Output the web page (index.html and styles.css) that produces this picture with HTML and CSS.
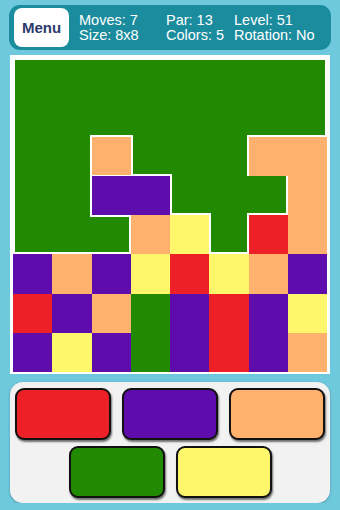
FILE: index.html
```html
<!DOCTYPE html>
<html>
<head>
    <title>Flood Board</title>
    <link rel="stylesheet" href="styles.css">
</head>
<body>
    <div class="topbar">
        <button class="menu-btn">Menu</button>
        <div class="stats">
            <span>Moves: 7</span><span>Par: 13</span><span>Level: 51</span>
            <span>Size: 8x8</span><span>Colors: 5</span><span>Rotation: No</span>
        </div>
    </div>

    <div class="board">
        <!-- row 0 -->
        <div class="cell green bt bl"></div>
        <div class="cell green bt"></div>
        <div class="cell green bt"></div>
        <div class="cell green bt"></div>
        <div class="cell green bt"></div>
        <div class="cell green bt"></div>
        <div class="cell green bt"></div>
        <div class="cell green bt br"></div>
        <!-- row 1 -->
        <div class="cell green bl"></div>
        <div class="cell green cbr"></div>
        <div class="cell green bb"></div>
        <div class="cell green cbl"></div>
        <div class="cell green"></div>
        <div class="cell green cbr"></div>
        <div class="cell green bb"></div>
        <div class="cell green br bb"></div>
        <!-- row 2 -->
        <div class="cell green bl"></div>
        <div class="cell green br"></div>
        <div class="cell orange bb thin"></div>
        <div class="cell green bl bb"></div>
        <div class="cell green cbl"></div>
        <div class="cell green br"></div>
        <div class="cell orange"></div>
        <div class="cell orange"></div>
        <!-- row 3 -->
        <div class="cell green bl"></div>
        <div class="cell green br"></div>
        <div class="cell purple"></div>
        <div class="cell purple"></div>
        <div class="cell green bl bb"></div>
        <div class="cell green cbl cbr"></div>
        <div class="cell green br bb"></div>
        <div class="cell orange"></div>
        <!-- row 4 -->
        <div class="cell green bl bb"></div>
        <div class="cell green bb ctr"></div>
        <div class="cell green bt br bb"></div>
        <div class="cell orange"></div>
        <div class="cell yellow"></div>
        <div class="cell green bl br bb"></div>
        <div class="cell red"></div>
        <div class="cell orange"></div>
        <!-- row 5 -->
        <div class="cell purple"></div>
        <div class="cell orange"></div>
        <div class="cell purple"></div>
        <div class="cell yellow"></div>
        <div class="cell red"></div>
        <div class="cell yellow"></div>
        <div class="cell orange"></div>
        <div class="cell purple"></div>
        <!-- row 6 -->
        <div class="cell red"></div>
        <div class="cell purple"></div>
        <div class="cell orange"></div>
        <div class="cell green"></div>
        <div class="cell purple"></div>
        <div class="cell red"></div>
        <div class="cell purple"></div>
        <div class="cell yellow"></div>
        <!-- row 7 -->
        <div class="cell purple"></div>
        <div class="cell yellow"></div>
        <div class="cell purple"></div>
        <div class="cell green"></div>
        <div class="cell purple"></div>
        <div class="cell red"></div>
        <div class="cell purple"></div>
        <div class="cell orange"></div>
    </div>

    <div class="palette">
        <button class="swatch red"></button>
        <button class="swatch purple"></button>
        <button class="swatch orange"></button>
        <button class="swatch green"></button>
        <button class="swatch yellow"></button>
    </div>
</body>
</html>
```

FILE: styles.css
```css
:root {
    --green: #218a00;
    --orange: #ffb16e;
    --purple: #5e0cab;
    --red: #ec2026;
    --yellow: #fff76b;
}

body {
    margin: 0;
    background: #6fc9dd;
    font-family: "Liberation Sans", Arial, sans-serif;
}

.topbar {
    display: flex;
    align-items: center;
    height: 45px;
    margin: 5px 9px 0;
    padding: 0 5px;
    background: #1b8c9e;
    border-radius: 11px;
    box-sizing: border-box;
}

.menu-btn {
    width: 55px;
    height: 39px;
    border: none;
    border-radius: 8px;
    background: #fff;
    color: #2c3a6c;
    font-family: inherit;
    font-weight: bold;
    font-size: 15px;
    padding: 0;
}

.stats {
    display: grid;
    grid-template-columns: 87px 68px auto;
    margin-left: 10px;
    color: #fff;
    font-size: 14.5px;
    line-height: 15px;
    white-space: nowrap;
}

.board {
    display: grid;
    grid-template-columns: repeat(8, 1fr);
    grid-auto-rows: 39.25px;
    margin: 5px 10px 0;
    padding: 3px 3px 2px;
    background: #fff;
}

.cell { box-sizing: border-box; position: relative; }
.bt { border-top: 2px solid #fff; }
.br { border-right: 2px solid #fff; }
.bb { border-bottom: 2px solid #fff; }
.bl { border-left: 2px solid #fff; }
.thin { border-bottom-width: 1.5px; }

/* inner corners of the flooded area */
.cbl::before, .cbr::after, .ctr::after {
    content: '';
    position: absolute;
    width: 2px;
    height: 2px;
    background: #fff;
}
.cbl::before { left: 0; bottom: 0; }
.cbr::after { right: 0; bottom: 0; }
.ctr::after { right: 0; top: 0; }

.green { background: var(--green); }
.orange { background: var(--orange); }
.purple { background: var(--purple); }
.red { background: var(--red); }
.yellow { background: var(--yellow); }

.palette {
    display: flex;
    flex-wrap: wrap;
    justify-content: center;
    gap: 6px 11px;
    margin: 8px 10px 0;
    padding: 6px 5px 5px;
    background: #f2f2f2;
    border-radius: 13px;
    box-shadow: 0 1px 3px rgba(0, 0, 0, 0.25);
}

.swatch {
    width: 96px;
    height: 52px;
    padding: 0;
    border: 2px solid #111;
    border-radius: 9px;
    box-shadow: 1px 2px 2px rgba(0, 0, 0, 0.55);
}
```
